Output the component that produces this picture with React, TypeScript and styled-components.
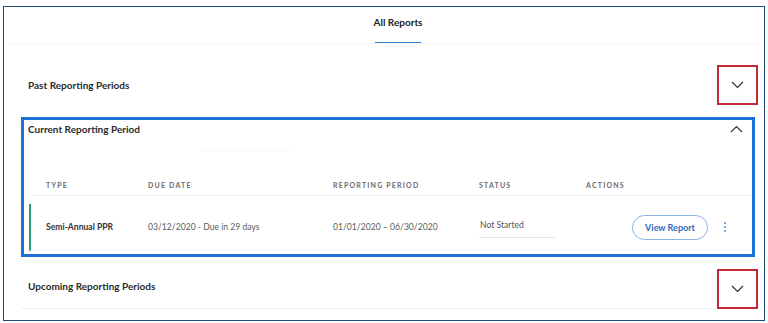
import React, { FC } from 'react'
import styled, { createGlobalStyle } from 'styled-components'

const GlobalStyle = createGlobalStyle`
  html, body {
    margin: 0;
    padding: 0;
    background: #ffffff;
  }
  body {
    font-family: Lato, 'Liberation Sans', sans-serif;
    color: #333;
  }
`

const Frame = styled.div`
  box-sizing: border-box;
  width: 762px;
  height: 315px;
  margin: 6px 0 0 3px;
  border: 1px solid #1d4e7c;
  display: flex;
  flex-direction: column;
  overflow: hidden;
`

const Tabs = styled.div`
  display: flex;
  justify-content: center;
  height: 37px;
  padding-left: 28px;
  border-bottom: 1px solid #f4f5f7;
  box-sizing: border-box;
`

const Tab = styled.div<{ $active?: boolean }>`
  display: flex;
  flex-direction: column;
  align-items: center;
  padding-top: 8px;
  font-size: 10px;
  line-height: 14px;
  font-weight: 700;
  color: #222;

  &:after {
    content: '';
    display: ${({ $active }) => ($active ? 'block' : 'none')};
    width: 46px;
    height: 2px;
    margin-top: 13px;
    background: #2f7fd1;
  }
`

const Content = styled.div`
  display: flex;
  flex-direction: column;
  padding: 21px 6px 0 17px;
`

const SectionRow = styled.div<{ $lined?: boolean }>`
  display: flex;
  align-items: center;
  justify-content: space-between;
  padding-left: 7px;
  border-bottom: 1px solid ${({ $lined }) => ($lined ? '#f0f1f3' : 'transparent')};
`

const SectionTitle = styled.div<{ $raise?: number }>`
  font-size: 10px;
  font-weight: 700;
  line-height: 14px;
  color: #2b2b2b;
  margin-top: ${({ $raise }) => ($raise ? -$raise : 0)}px;
`

const ToggleBox = styled.div`
  box-sizing: border-box;
  width: 41px;
  height: 40px;
  border: 2px solid #c5283a;
  display: flex;
  align-items: center;
  justify-content: center;
  margin-bottom: -1px;
`

const ExpandedCard = styled.div`
  box-sizing: border-box;
  height: 140px;
  margin: 12px 3px 12px 0;
  border: 3px solid #1c70d6;
  display: flex;
  flex-direction: column;
`

const CardHeader = styled.div`
  display: flex;
  align-items: center;
  justify-content: space-between;
  padding: 2px 9px 2px 4px;
  height: 14px;
`

const HeaderDivider = styled.div`
  height: 1px;
  width: 90px;
  margin: 12px 0 0 176px;
  background: #f4f5f6;
`

const Table = styled.div`
  display: flex;
  flex-direction: column;
  margin: 24px 0 0 5px;
`

const Grid = styled.div`
  display: grid;
  grid-template-columns: 102px 185px 146px 107px 1fr;
  align-items: center;
  padding-left: 15px;
`

const HeadRow = styled(Grid)`
  height: 20px;
  border-left: 2px solid transparent;
  border-bottom: 1px solid #f0f1f3;
  margin-bottom: 8px;
`

const HeadCell = styled.div`
  font-size: 7px;
  font-weight: 700;
  letter-spacing: 1.2px;
  color: #6b6b6b;
`

const BodyRow = styled(Grid)`
  height: 46px;
  border-left: 2px solid #2f9e6e;
  border-bottom: 1px solid #f3f4f6;
`

const Cell = styled.div<{ $strong?: boolean }>`
  font-size: 8.6px;
  font-weight: ${({ $strong }) => ($strong ? 700 : 400)};
  color: ${({ $strong }) => ($strong ? '#333' : '#5a5a5a')};
  white-space: nowrap;
`

const StatusCell = styled.div`
  font-size: 8.6px;
  color: #555;
  width: 75px;
  padding: 0 0 7px 1px;
  margin-top: 4px;
  border-bottom: 1px solid #e4e4e4;
`

const Actions = styled.div`
  display: flex;
  align-items: center;
  justify-content: flex-end;
  gap: 16px;
  padding-right: 26px;
`

const ViewButton = styled.button`
  box-sizing: border-box;
  width: 76px;
  height: 25px;
  border-radius: 13px;
  border: 1px solid #8db6e4;
  background: #fff;
  color: #2c6cbc;
  font-family: Lato, 'Liberation Sans', sans-serif;
  font-size: 9px;
  font-weight: 700;
  padding: 0;
`

const Kebab = styled.div`
  display: flex;
  flex-direction: column;
  gap: 2px;

  span {
    width: 2px;
    height: 2px;
    border-radius: 1px;
    background: #4b8fd9;
  }
`

const Chevron: FC<{ up?: boolean }> = ({ up }) => (
  <svg width="13" height="8" viewBox="0 0 13 8">
    <polyline
      points={up ? '1,7 6.5,1.5 12,7' : '1,1 6.5,6.5 12,1'}
      fill="none"
      stroke="#333"
      strokeWidth="1.2"
    />
  </svg>
)

const columns = ['TYPE', 'DUE DATE', 'REPORTING PERIOD', 'STATUS', 'ACTIONS']

const App: FC = () => {
  return (
    <>
      <GlobalStyle />
      <Frame>
        <Tabs>
          <Tab $active>All Reports</Tab>
        </Tabs>
        <Content>
          <SectionRow>
            <SectionTitle>Past Reporting Periods</SectionTitle>
            <ToggleBox>
              <Chevron />
            </ToggleBox>
          </SectionRow>

          <ExpandedCard>
            <CardHeader>
              <SectionTitle>Current Reporting Period</SectionTitle>
              <Chevron up />
            </CardHeader>
            <HeaderDivider />
            <Table>
              <HeadRow>
                {columns.map((c) => (
                  <HeadCell key={c}>{c}</HeadCell>
                ))}
              </HeadRow>
              <BodyRow>
                <Cell $strong>Semi-Annual PPR</Cell>
                <Cell>03/12/2020 - Due in 29 days</Cell>
                <Cell>01/01/2020 – 06/30/2020</Cell>
                <div>
                  <StatusCell>Not Started</StatusCell>
                </div>
                <Actions>
                  <ViewButton>View Report</ViewButton>
                  <Kebab>
                    <span />
                    <span />
                    <span />
                  </Kebab>
                </Actions>
              </BodyRow>
            </Table>
          </ExpandedCard>

          <SectionRow $lined>
            <SectionTitle $raise={5}>Upcoming Reporting Periods</SectionTitle>
            <ToggleBox>
              <Chevron />
            </ToggleBox>
          </SectionRow>
        </Content>
      </Frame>
    </>
  )
}

export default App
